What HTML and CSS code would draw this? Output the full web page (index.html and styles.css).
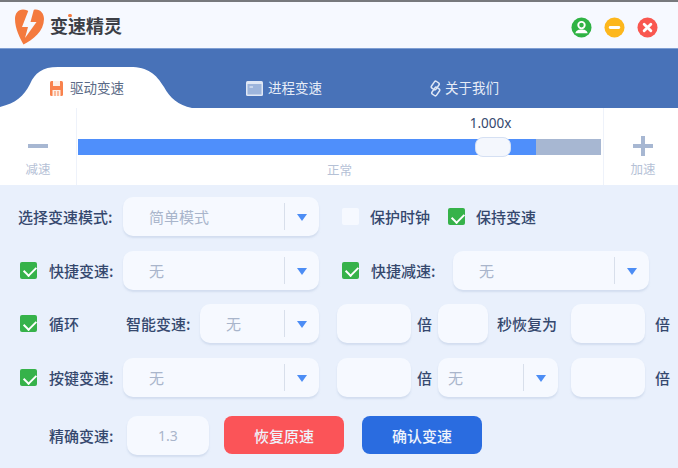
FILE: index.html
```html
<!DOCTYPE html>
<html lang="zh-CN">
<head>
    <meta charset="UTF-8">
    <title>变速精灵</title>
    <link rel="stylesheet" href="styles.css">
</head>
<body>
    <div class="topline"></div>

    <div class="titlebar">
        <svg class="logo" width="30" height="36" viewBox="0 0 30 36">
            <path fill="#f47a3e" d="M8 0.500 C3 0.500 0 4.500 0 10 C0 20 5 29 8.500 35.500 C18 31 29 22 29 10 C29 4 25 0 20 0.500 C17 0.800 15 2 14.500 3 C13 1.500 11 0.500 8 0.500 Z"/>
            <path fill="#f6f9ff" d="M14 0 L7 18 L13 18 L10 29 L21.500 13 L15.500 13 L19 0 Z"/>
        </svg>
        <div class="app-name">变速精灵<span class="spark"></span></div>
        <div class="win-btns">
            <svg width="21" height="21" viewBox="0 0 22 22">
                <circle cx="11" cy="11" r="10.500" fill="#2fb344"/>
                <circle cx="11" cy="8.500" r="3.400" fill="none" stroke="#fff" stroke-width="2"/>
                <path fill="#fff" d="M4.500 17 C5.500 13.500 8 13 11 13 C14 13 16.500 13.500 17.500 17 Z"/>
            </svg>
            <svg width="21" height="21" viewBox="0 0 22 22">
                <circle cx="11" cy="11" r="10.500" fill="#fdb71c"/>
                <path stroke="#fff" stroke-width="3" stroke-linecap="round" d="M6.500 11 H15.500"/>
            </svg>
            <svg width="21" height="21" viewBox="0 0 22 22">
                <circle cx="11" cy="11" r="10.500" fill="#f9574f"/>
                <path stroke="#fff" stroke-width="3" stroke-linecap="round" d="M7.500 7.500 L14.500 14.500 M14.500 7.500 L7.500 14.500"/>
            </svg>
        </div>
    </div>

    <div class="tabs">
        <svg class="tab-curve" width="200" height="42" viewBox="0 0 200 42">
            <path fill="#fff" d="M0 41 C16 37 24 30 30 18 C35 7 42 1 58 1 L130 1 C148 1 156 8 164 21 C170 32 178 39 192 42 L0 42 Z"/>
        </svg>
        <div class="tab tab-active">
            <svg width="13" height="15" viewBox="0 0 13 15">
                <path fill="#f9824d" d="M0 1.500 Q0 0 1.500 0 H11.500 Q13 0 13 1.500 V13.500 Q13 15 11.500 15 H1.500 Q0 15 0 13.500 Z"/>
                <rect x="3" y="0" width="7" height="5" fill="#fdf0e8"/>
                <rect x="2.500" y="9" width="8" height="6" fill="#fdf0e8"/>
                <path stroke="#f9824d" d="M5 10 V15 M8 10 V15"/>
            </svg>
            <span>驱动变速</span>
        </div>
        <div class="tab tab-process">
            <svg width="17" height="15" viewBox="0 0 17 15">
                <rect width="17" height="15" rx="1.500" fill="#dfe7f5"/>
                <rect x="1.500" y="3" width="14" height="10.500" fill="#9db5dc"/>
                <path stroke="#f1f5fc" d="M3.500 6 H7"/>
            </svg>
            <span>进程变速</span>
        </div>
        <div class="tab tab-about">
            <svg width="11" height="17" viewBox="0 0 11 17">
                <rect x="2.500" y="1.500" width="5.500" height="8" rx="1.500" fill="none" stroke="#dfe7f5" stroke-width="1.500" transform="rotate(35 5.250 5.500)"/>
                <rect x="3" y="7.500" width="5.500" height="8" rx="1.500" fill="none" stroke="#dfe7f5" stroke-width="1.500" transform="rotate(35 5.750 11.500)"/>
            </svg>
            <span>关于我们</span>
        </div>
    </div>

    <div class="speed-bar">
        <div class="speed-side speed-minus">
            <div class="speed-icon">
                <span class="icon-h"></span>
            </div>
            <div class="speed-note">减速</div>
        </div>
        <div class="speed-main">
            <div class="speed-value">1.000x</div>
            <div class="track">
                <div class="track-fill"></div>
                <div class="thumb"></div>
            </div>
            <div class="speed-note">正常</div>
        </div>
        <div class="speed-side speed-plus">
            <div class="speed-icon">
                <span class="icon-h"></span>
                <span class="icon-v"></span>
            </div>
            <div class="speed-note">加速</div>
        </div>
    </div>

    <div class="panel">
        <div class="row">
            <label class="label w-mode">选择变速模式:</label>
            <div class="select w-196"><span class="select-text">简单模式</span><span class="select-arrow"></span></div>
            <span class="check check-off ml-23"></span>
            <label class="label ml-11">保护时钟</label>
            <span class="check ml-18"></span>
            <label class="label ml-11">保持变速</label>
        </div>

        <div class="row">
            <span class="check ml-2"></span>
            <label class="label w-key">快捷变速:</label>
            <div class="select w-196"><span class="select-text">无</span><span class="select-arrow"></span></div>
            <span class="check ml-23"></span>
            <label class="label w-key2">快捷减速:</label>
            <div class="select w-196"><span class="select-text">无</span><span class="select-arrow"></span></div>
        </div>

        <div class="row">
            <span class="check ml-2"></span>
            <label class="label w-loop">循环</label>
            <label class="label w-smart">智能变速:</label>
            <div class="select w-119"><span class="select-text">无</span><span class="select-arrow"></span></div>
            <div class="input w-74 ml-18"></div>
            <label class="label ml-6">倍</label>
            <div class="input w-50 ml-6"></div>
            <label class="label ml-9">秒恢复为</label>
            <div class="input w-74 ml-14"></div>
            <label class="label ml-10">倍</label>
        </div>

        <div class="row">
            <span class="check ml-2"></span>
            <label class="label w-key">按键变速:</label>
            <div class="select w-196"><span class="select-text">无</span><span class="select-arrow"></span></div>
            <div class="input w-74 ml-18"></div>
            <label class="label ml-6">倍</label>
            <div class="select select-short w-120 ml-6"><span class="select-text">无</span><span class="select-arrow"></span></div>
            <div class="input w-74 ml-13"></div>
            <label class="label ml-10">倍</label>
        </div>

        <div class="row row-last">
            <label class="label w-exact">精确变速:</label>
            <div class="input input-val w-82">1.3</div>
            <button class="btn btn-red">恢复原速</button>
            <button class="btn btn-blue">确认变速</button>
        </div>
    </div>
</body>
</html>
```

FILE: styles.css
```css
* {
    box-sizing: border-box;
}

body {
    margin: 0;
    width: 678px;
    height: 468px;
    overflow: hidden;
    font-family: "Noto Sans CJK SC", "Noto Sans", sans-serif;
    background-color: #e9f0fc;
    color: #35486e;
}

.topline {
    height: 2px;
    background-color: #77797d;
}

/* 标题栏 */
.titlebar {
    height: 46px;
    display: flex;
    align-items: center;
    padding: 0 20px 0 15px;
    background-color: #f6f9ff;
}

.logo {
    margin-top: 3px;
}

.app-name {
    position: relative;
    margin-left: 5px;
    font-size: 18px;
    font-weight: 700;
    color: #3c3f46;
}

.spark {
    position: absolute;
    left: 18px;
    top: 2px;
    width: 4px;
    height: 3px;
    border-radius: 2px;
    background-color: #f47a3e;
}

.win-btns {
    margin-left: auto;
    margin-top: 5px;
    display: flex;
    gap: 12px;
}

/* 顶部选项卡 */
.tabs {
    position: relative;
    height: 60px;
    background-color: #4872b8;
    border-top: 1px solid #7f9fd3;
    font-size: 13.500px;
    color: #e6ecf7;
}

.tab-curve {
    position: absolute;
    left: 0;
    bottom: 0;
}

.tab {
    position: absolute;
    top: 27px;
    height: 24px;
    display: flex;
    align-items: center;
    gap: 7px;
    line-height: 1;
}

.tab-active {
    left: 50px;
    color: #5a6a86;
}

.tab-process {
    left: 246px;
    gap: 5px;
}

.tab-about {
    left: 430px;
    gap: 4px;
}

/* 速度滑块 */
.speed-bar {
    height: 77px;
    display: flex;
    background-color: #fff;
}

.speed-side {
    width: 77px;
    display: flex;
    flex-direction: column;
    align-items: center;
}

.speed-minus {
    border-right: 1.500px solid #eef2fa;
}

.speed-plus {
    width: 75px;
    padding-left: 4px;
    border-left: 1.500px solid #eef2fa;
    margin-left: 2px;
}

.speed-icon {
    position: relative;
    width: 20px;
    height: 20px;
    margin-top: 28px;
}

.icon-h {
    position: absolute;
    left: 0;
    top: 8px;
    width: 20px;
    height: 4px;
    background-color: #a7b7d2;
}

.icon-v {
    position: absolute;
    left: 8px;
    top: 0;
    width: 4px;
    height: 20px;
    background-color: #a7b7d2;
}

.speed-note {
    margin-top: 5px;
    font-size: 12.500px;
    line-height: 16px;
    color: #b5c1d6;
}

.speed-main {
    flex: 1;
    display: flex;
    flex-direction: column;
    align-items: center;
    padding-left: 1px;
}

.speed-value {
    margin: 6px 0 0 302px;
    font-family: "Noto Sans", sans-serif;
    font-size: 13.500px;
    line-height: 18px;
    color: #35486e;
}

.track {
    position: relative;
    width: 100%;
    height: 16px;
    margin-top: 7px;
    background-color: #a7b7d2;
}

.track-fill {
    width: 458px;
    height: 100%;
    background-color: #4f8ffb;
}

.thumb {
    position: absolute;
    left: 397px;
    top: -2px;
    width: 36px;
    height: 20px;
    border: 1px solid #d5e0f3;
    border-radius: 8px;
    background-color: #f4f7fd;
}

.speed-main .speed-note {
    margin-top: 7px;
}

/* 表单 */
.panel {
    display: flex;
    flex-direction: column;
    gap: 14.700px;
    padding: 12px 0 0 18px;
}

.row {
    display: flex;
    align-items: center;
    height: 39px;
}

.row-last {
    margin-top: 4px;
}

.label {
    flex-shrink: 0;
    font-size: 15px;
    font-weight: 500;
    white-space: nowrap;
    color: #35486e;
}

.select,
.input {
    flex-shrink: 0;
    height: 39px;
    background-color: #f6f9ff;
    border-radius: 10px;
    box-shadow: 0 2px 2px rgba(170, 186, 215, 0.35);
}

.select {
    position: relative;
    display: flex;
    align-items: center;
    font-size: 15px;
    color: #a9b5cb;
}

.select-text {
    padding-left: 26px;
}

.select-short .select-text {
    padding-left: 10px;
}

.select-arrow {
    position: absolute;
    right: 0;
    top: 6px;
    width: 35px;
    height: 27px;
    border-left: 1.500px solid #d8dfeb;
}

.select-arrow::after {
    content: "";
    position: absolute;
    left: 12px;
    top: 11px;
    border-left: 5px solid transparent;
    border-right: 5px solid transparent;
    border-top: 7px solid #4c8df5;
}

.input-val {
    display: flex;
    align-items: center;
    justify-content: center;
    font-family: "Noto Sans", sans-serif;
    font-size: 14px;
    color: #a9b5cb;
}

.check {
    position: relative;
    flex-shrink: 0;
    width: 17px;
    height: 17px;
    border-radius: 2px;
    background-color: #36b24a;
}

.check::after {
    content: "";
    position: absolute;
    left: 5.500px;
    top: 2.500px;
    width: 6px;
    height: 10px;
    border: solid #fff;
    border-width: 0 2.500px 2.500px 0;
    transform: rotate(45deg);
}

.check-off {
    background-color: #f6f9ff;
}

.check-off::after {
    display: none;
}

.btn {
    height: 38px;
    width: 120px;
    padding: 0;
    border: none;
    border-radius: 8px;
    font-family: inherit;
    font-size: 15px;
    font-weight: 500;
    color: #eef3fc;
}

.btn-red {
    margin-left: 15px;
    background-color: #fb5458;
}

.btn-blue {
    margin-left: 18px;
    background-color: #2a6ce0;
}

/* 宽度和间距 */
.w-mode { width: 105px; }
.w-key { width: 86px; padding-left: 12px; }
.w-key2 { width: 94px; padding-left: 12px; }
.w-loop { width: 89px; padding-left: 12px; }
.w-smart { width: 74px; }
.w-exact { width: 109px; padding-left: 31px; }
.w-196 { width: 196px; }
.w-119 { width: 119px; }
.w-120 { width: 120px; }
.w-74 { width: 74px; }
.w-50 { width: 50px; }
.w-82 { width: 82px; }
.ml-2 { margin-left: 2px; }
.ml-6 { margin-left: 6px; }
.ml-9 { margin-left: 9px; }
.ml-10 { margin-left: 10px; }
.ml-11 { margin-left: 11px; }
.ml-13 { margin-left: 13px; }
.ml-14 { margin-left: 14px; }
.ml-18 { margin-left: 18px; }
.ml-23 { margin-left: 23px; }
```
